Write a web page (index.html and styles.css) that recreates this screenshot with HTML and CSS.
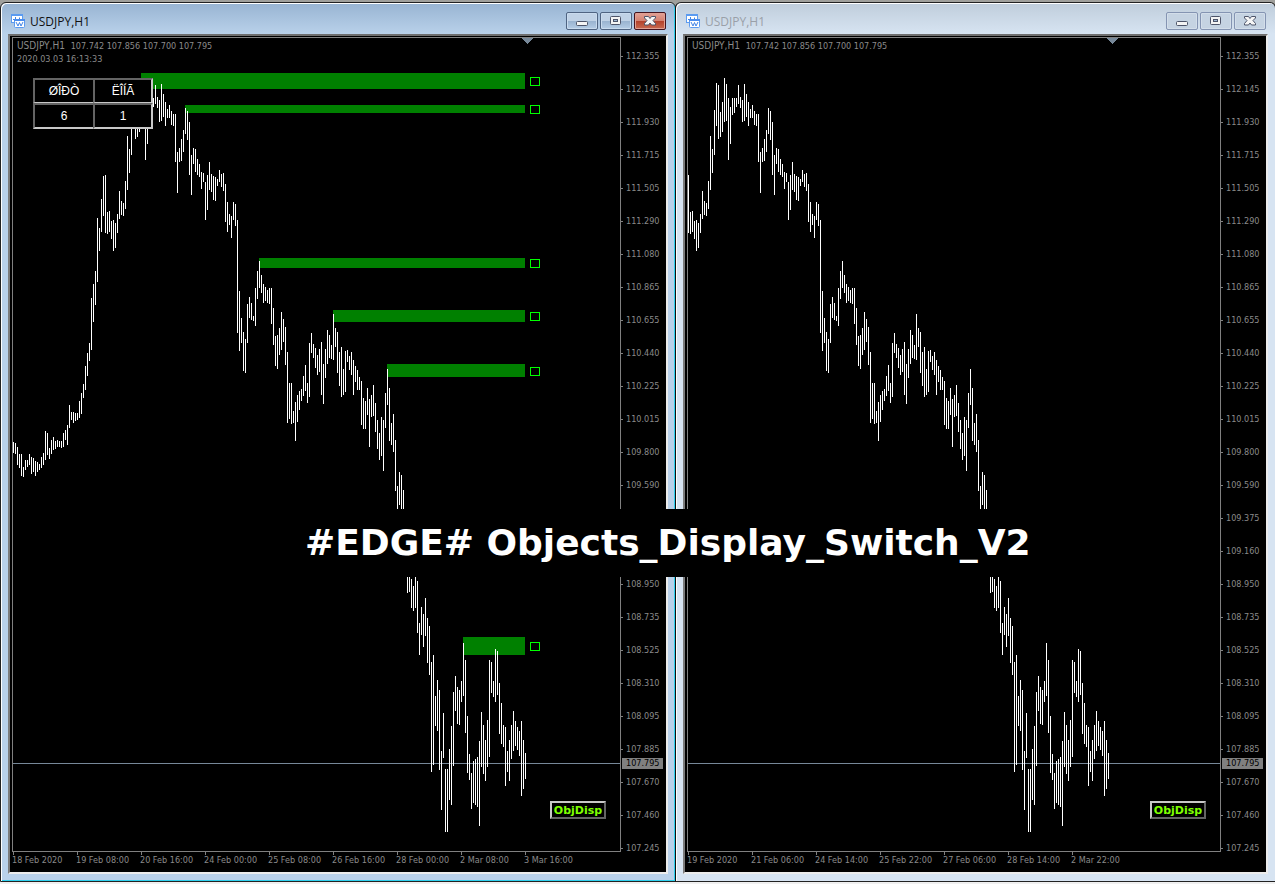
FILE: index.html
```
<!DOCTYPE html>
<html lang="en">

<head>
    <meta charset="UTF-8">
    <meta name="viewport" content="width=device-width, initial-scale=1.0">
    <title>Objects_Display_Switch_V2</title>
    <link rel="stylesheet" href="styles.css">
    <script src="chart.js" defer></script>
</head>

<body class="desktop">
    <!-- shared icons -->
    <svg class="sprite" aria-hidden="true">
        <symbol id="icon-chart" viewBox="0 0 14 14">
            <rect x="0.5" y="0.5" width="11" height="8" fill="#fff" stroke="#5b9bf0" />
            <path d="M0 1h12" stroke="#5b9bf0" stroke-width="2" />
            <path d="M2 5.500h1.500M4.500 3v4M6 5.500h1.500M8.500 3.500v2" stroke="#3f83e6" fill="none" />
            <rect x="3.500" y="5.500" width="10" height="8" rx="1" fill="#fff" stroke="#5b9bf0" />
            <path d="M3 6h11" stroke="#4a8ded" stroke-width="2" />
            <path d="M5 8l2 4 1.500-3.500 1.500 3.500 2-4" stroke="#3f83e6" fill="none" />
        </symbol>
        <symbol id="icon-min" viewBox="0 0 12 12">
            <rect x="0.5" y="6.500" width="11" height="4" rx="1" fill="#f4f4f4" stroke="#4d5469" />
        </symbol>
        <symbol id="icon-max" viewBox="0 0 12 12">
            <rect x="0.5" y="1.500" width="10" height="8" rx="1" fill="#f4f4f4" stroke="#4d5469" />
            <rect x="3.500" y="4.500" width="4" height="2" fill="#9db6d2" stroke="#4d5469" />
        </symbol>
        <symbol id="icon-close" viewBox="0 0 12 12">
            <path d="M0.5 1.500h4l1.500 2 1.500-2h4v1.500L9 5.500l2.500 3V10h-4L6 8l-1.500 2h-4V8.500L3 5.500 0.5 3z" fill="#f6f6f6" stroke="#4d5469" />
        </symbol>
    </svg>

    <main class="windows">
        <section class="window active">
            <header class="titlebar">
                <svg class="app-icon"><use href="#icon-chart" /></svg>
                <h1 class="caption">USDJPY,H1</h1>
                <button class="win-btn" aria-label="Minimize"><svg><use href="#icon-min" /></svg></button>
                <button class="win-btn" aria-label="Maximize"><svg><use href="#icon-max" /></svg></button>
                <button class="win-btn close" aria-label="Close"><svg><use href="#icon-close" /></svg></button>
            </header>
            <div class="client">
                <div class="plot">
                    <svg class="candles" data-skip="0" data-marker="514" data-zones="on"></svg>
                    <p class="quote"><span class="symbol">USDJPY,H1&nbsp; </span>107.742 107.856 107.700 107.795<br>2020.03.03 16:13:33</p>
                    <table class="counter">
                        <tr>
                            <th>ØÎÐÒ</th>
                            <th>ËÎÍÃ</th>
                        </tr>
                        <tr>
                            <td>6</td>
                            <td>1</td>
                        </tr>
                    </table>
                    <button class="obj-btn">ObjDisp</button>
                </div>
                <div class="prices"></div>
                <div class="times">
                    <span>18 Feb 2020</span>
                    <span>19 Feb 08:00</span>
                    <span>20 Feb 16:00</span>
                    <span>24 Feb 00:00</span>
                    <span>25 Feb 08:00</span>
                    <span>26 Feb 16:00</span>
                    <span>28 Feb 00:00</span>
                    <span>2 Mar 08:00</span>
                    <span>3 Mar 16:00</span>
                </div>
            </div>
        </section>

        <section class="window">
            <header class="titlebar">
                <svg class="app-icon"><use href="#icon-chart" /></svg>
                <h1 class="caption">USDJPY,H1</h1>
                <button class="win-btn" aria-label="Minimize"><svg><use href="#icon-min" /></svg></button>
                <button class="win-btn" aria-label="Maximize"><svg><use href="#icon-max" /></svg></button>
                <button class="win-btn close" aria-label="Close"><svg><use href="#icon-close" /></svg></button>
            </header>
            <div class="client">
                <div class="plot">
                    <svg class="candles" data-skip="46" data-marker="424" data-zones="off"></svg>
                    <p class="quote"><span class="symbol">USDJPY,H1&nbsp; </span>107.742 107.856 107.700 107.795</p>
                    <button class="obj-btn">ObjDisp</button>
                </div>
                <div class="prices"></div>
                <div class="times">
                    <span>19 Feb 2020</span>
                    <span>21 Feb 06:00</span>
                    <span>24 Feb 14:00</span>
                    <span>25 Feb 22:00</span>
                    <span>27 Feb 06:00</span>
                    <span>28 Feb 14:00</span>
                    <span>2 Mar 22:00</span>
                </div>
            </div>
        </section>
    </main>

    <div class="banner">#EDGE# Objects_Display_Switch_V2</div>
</body>

</html>
```

FILE: styles.css
```
.desktop {
    margin: 0;
    padding-top: 2px;
    position: relative;
    overflow-x: hidden;
    background: #a0a09c;
    font-family: "DejaVu Sans Condensed", "Open Sans", sans-serif;
    font-size: 9px;
    color: #8a8a8a;
}

.sprite {
    position: absolute;
    width: 0;
    height: 0;
}

.windows {
    display: grid;
    grid-template-columns: 676fr 599fr;
    padding-bottom: 2px;
    background: linear-gradient(#a0a09c 50px, #f0f0f0 50px);
}

/* window frame */
.window {
    min-width: 0;
    padding: 0 7px 7px;
    border: 1px solid #222;
    border-radius: 6px 6px 0 0;
    background: linear-gradient(#bfcddb, #d7e4f2 31px);
    box-shadow: inset 1px 1px #fff;
}

.window + .window {
    margin: 0 -1px;
    border-left-color: #111;
}

.window.active {
    background: linear-gradient(#98b4d2, #b9d1ea 31px);
    box-shadow: inset 1px 1px #fff, inset -1px -1px #2fd0ee;
}

.titlebar {
    display: flex;
    gap: 2px;
    height: 31px;
    padding-right: 2px;
}

.app-icon {
    width: 14px;
    height: 14px;
    margin: 11px 3px 0;
}

.caption {
    flex: 1;
    margin: 10px 0 0;
    font: 12px/17px "Open Sans", sans-serif;
    color: #9aa0a8;
}

.active .caption {
    color: #111;
}

.win-btn {
    display: flex;
    justify-content: center;
    align-items: center;
    width: 32px;
    height: 18px;
    margin-top: 9px;
    padding: 0;
    border: 1px solid #8494b2;
    border-radius: 2px;
    background: #c5d3e2;
    box-shadow: inset 0 0 0 1px #d3deea;
}

.win-btn svg {
    width: 12px;
    height: 12px;
}

.active .win-btn {
    border-color: #4f6482;
    background: linear-gradient(#c0d2e6 50%, #98b2cf 50%, #b5cde6);
    box-shadow: inset 0 0 0 1px #c9dbee;
}

.active .win-btn.close {
    border-color: #43131e;
    background: linear-gradient(#e2a196, #d4806f 50%, #b3402a 50%, #c86a50);
    box-shadow: inset 0 0 0 1px #e0a093;
}

/* chart area */
.client {
    display: grid;
    grid-template-columns: 1fr 45px;
    grid-template-rows: auto 20px;
    padding: 1px 0 0 2px;
    border: 2px solid #ececec;
    border-top-color: #6e6e6e;
    border-left-color: #7c7c7c;
    background: #000;
}

.plot {
    position: relative;
    min-width: 0;
    border: 1px solid #808080;
}

.candles {
    display: block;
    width: 100%;
    height: 813px;
    shape-rendering: crispEdges;
}

.bars {
    stroke: #fff;
}

.zone {
    fill: #008000;
}

.handle {
    fill: none;
    stroke: #00ff00;
}

.bid {
    stroke: #778899;
}

.marker {
    fill: #778899;
}

.quote {
    position: absolute;
    top: 1px;
    left: 4px;
    margin: 0;
    line-height: 13px;
}

.symbol {
    font-size: 10px;
}

.counter {
    position: absolute;
    top: 40px;
    left: 20px;
    border-spacing: 0;
    background: #000;
    color: #fff;
    font: 12px/14px "Liberation Sans", Arial, sans-serif;
    text-align: center;
}

.counter th,
.counter td {
    box-sizing: border-box;
    width: 60px;
    height: 26px;
    padding: 0;
    border: 0 solid #c8c8c8;
    border-top: 2px solid #646464;
    border-left: 2px solid #646464;
    font-weight: normal;
}

.counter th {
    height: 25px;
    border-bottom-width: 1px;
}

.counter td {
    border-bottom-width: 2px;
}

.counter th:last-child,
.counter td:last-child {
    border-right-width: 2px;
}

.obj-btn {
    position: absolute;
    right: 14px;
    bottom: 32px;
    width: 56px;
    height: 18px;
    padding: 1px 0 0;
    border: 2px solid;
    border-color: #c8c8c8 #646464 #646464 #c8c8c8;
    background: #000;
    color: #7fff00;
    font: bold 11px/13px "DejaVu Sans", Verdana, sans-serif;
}

/* axes */
.prices {
    position: relative;
    grid-row: span 2;
    padding-top: 3px;
}

.price {
    position: relative;
    height: 33px;
    padding-left: 5px;
    line-height: 33px;
}

.price::before {
    content: "";
    position: absolute;
    top: 16px;
    left: 0;
    width: 2px;
    height: 1px;
    background: #808080;
}

/* these two sit behind the banner */
.active .price:nth-child(15),
.active .price:nth-child(16) {
    visibility: hidden;
}

.price-now {
    position: absolute;
    top: 721px;
    left: 1px;
    width: 37px;
    padding-left: 4px;
    line-height: 11px;
    background: #808080;
    color: #000;
}

.times {
    display: flex;
    overflow: hidden;
}

.times span {
    position: relative;
    flex: 0 0 64px;
    line-height: 17px;
    white-space: nowrap;
}

.times span::before {
    content: "";
    position: absolute;
    top: 0;
    left: 1px;
    width: 1px;
    height: 3px;
    background: #808080;
}

.banner {
    position: absolute;
    top: 509px;
    left: 290px;
    padding: 0 15px;
    background: #000;
    color: #fff;
    font: bold 36px/68px "DejaVu Sans", Verdana, sans-serif;
    white-space: nowrap;
}
```

FILE: chart.js
```
// high / low of every bar, as y offsets inside the plot
const bars = [
    [404, 415], [405, 416], [409, 427], [416, 430], [416, 438], [429, 439], [422, 432], [422, 429],
    [416, 427], [419, 436], [420, 434], [423, 438], [424, 434], [426, 432], [419, 430], [415, 427],
    [393, 422], [395, 417], [410, 421], [402, 416], [399, 412], [403, 411], [402, 409], [403, 409],
    [403, 410], [395, 409], [392, 402], [387, 407], [367, 390], [374, 382], [374, 385], [375, 383],
    [375, 382], [363, 380], [355, 376], [346, 360], [328, 352], [315, 338], [305, 323], [260, 312],
    [246, 284], [233, 267], [180, 244], [190, 213], [161, 194], [138, 178],
    [137, 195], [174, 196], [173, 194], [183, 201], [182, 213], [185, 210], [176, 195], [153, 181],
    [163, 177], [165, 178], [143, 171], [98, 152], [111, 135], [72, 117], [45, 88], [47, 101],
    [74, 99], [64, 94], [40, 84], [46, 83], [60, 122], [69, 106], [60, 77], [60, 75],
    [60, 69], [47, 66], [59, 70], [62, 84], [46, 83], [56, 79], [64, 88], [71, 80],
    [67, 80], [73, 87], [76, 88], [76, 124], [114, 155], [110, 124], [101, 123], [92, 114],
    [70, 96], [73, 102], [84, 137], [117, 157], [110, 126], [111, 134], [121, 137], [126, 139],
    [134, 151], [135, 144], [144, 182], [137, 172], [124, 152], [136, 154], [138, 162], [139, 163],
    [141, 148], [132, 144], [136, 149], [135, 153], [146, 184], [164, 194], [176, 187], [178, 200],
    [164, 182], [166, 188], [182, 295], [253, 313], [280, 305], [294, 333], [301, 335], [266, 305],
    [259, 280], [265, 282], [278, 283], [250, 288], [233, 261], [223, 250], [237, 255], [246, 265],
    [249, 263], [252, 265], [250, 266], [250, 286], [270, 307], [298, 328], [297, 331], [290, 317],
    [274, 312], [281, 304], [289, 327], [314, 385], [345, 381], [345, 386], [373, 385], [364, 403],
    [357, 384], [353, 372], [351, 363], [338, 358], [327, 353], [345, 365], [305, 359], [295, 315],
    [306, 320], [310, 330], [317, 337], [311, 334], [304, 357], [326, 366], [311, 340], [292, 326],
    [297, 320], [307, 321], [276, 322], [290, 309], [294, 335], [314, 348], [309, 359], [331, 357],
    [313, 354], [312, 324], [318, 332], [314, 337], [322, 357], [328, 344], [332, 352], [339, 352],
    [343, 387], [360, 391], [363, 391], [350, 377], [361, 409], [357, 379], [347, 378], [365, 394],
    [382, 411], [395, 422], [379, 418], [382, 433], [355, 390], [331, 367], [350, 403], [385, 407],
    [376, 414], [402, 453], [448, 480], [434, 467], [437, 490], [452, 500], [475, 520],
    [495, 555], [505, 554], [541, 570], [548, 573], [520, 570], [543, 595], [585, 617], [569, 597],
    [576, 609], [560, 598], [580, 625], [588, 637], [624, 734], [617, 727], [658, 688], [642, 693],
    [652, 732], [713, 772], [675, 720], [731, 794], [731, 794], [711, 762], [688, 767], [654, 728],
    [638, 673], [649, 686], [652, 687], [643, 664], [605, 658], [622, 695], [678, 735], [716, 742],
    [735, 771], [723, 765], [721, 767], [719, 769], [703, 788], [674, 729], [687, 736], [702, 743],
    [682, 729], [622, 719], [624, 655], [643, 659], [611, 664], [613, 657], [645, 696], [665, 706],
    [687, 709], [689, 748], [713, 734], [702, 743], [687, 721], [673, 713], [683, 708], [689, 712],
    [693, 718], [683, 758], [702, 751], [715, 741]
];

// x, y, height of each supply zone, all of them end at the last bar
const zones = [
    [128, 35, 16], [172, 67, 8], [246, 220, 10], [320, 272, 12], [374, 326, 13], [450, 599, 18]
];
const zoneEnd = 512;

const prices = [
    "112.355", "112.145", "111.930", "111.715", "111.505", "111.290", "111.080", "110.865", "110.655",
    "110.440", "110.225", "110.015", "109.800", "109.590", "109.375", "109.160", "108.950", "108.735",
    "108.525", "108.310", "108.095", "107.885", "107.670", "107.460", "107.245"
];

document.querySelectorAll(".candles").forEach(svg => {
    const skip = Number(svg.dataset.skip);
    const marker = Number(svg.dataset.marker);
    let out = "";
    if (svg.dataset.zones == "on") {
        for (const [x, y, h] of zones) {
            const mid = y + Math.round(h / 2);
            out += `<rect class="zone" x="${x}" y="${y}" width="${zoneEnd - x}" height="${h}" />`;
            out += `<rect class="handle" x="517.5" y="${mid - 3.5}" width="9" height="8" />`;
        }
    }
    out += `<path class="bid" d="M0 725.5H2000" />`;
    const d = bars.slice(skip).map(([high, low], i) => `M${i * 2 + 0.5} ${high}V${low}`).join("");
    out += `<path class="bars" d="${d}" />`;
    out += `<path class="marker" d="M${marker - 5} 0h11l-5.5 6z" />`;
    svg.innerHTML = out;
});

document.querySelectorAll(".prices").forEach(el => {
    el.innerHTML = prices.map(p => `<div class="price">${p}</div>`).join("") +
        `<div class="price-now">107.795</div>`;
});
```
